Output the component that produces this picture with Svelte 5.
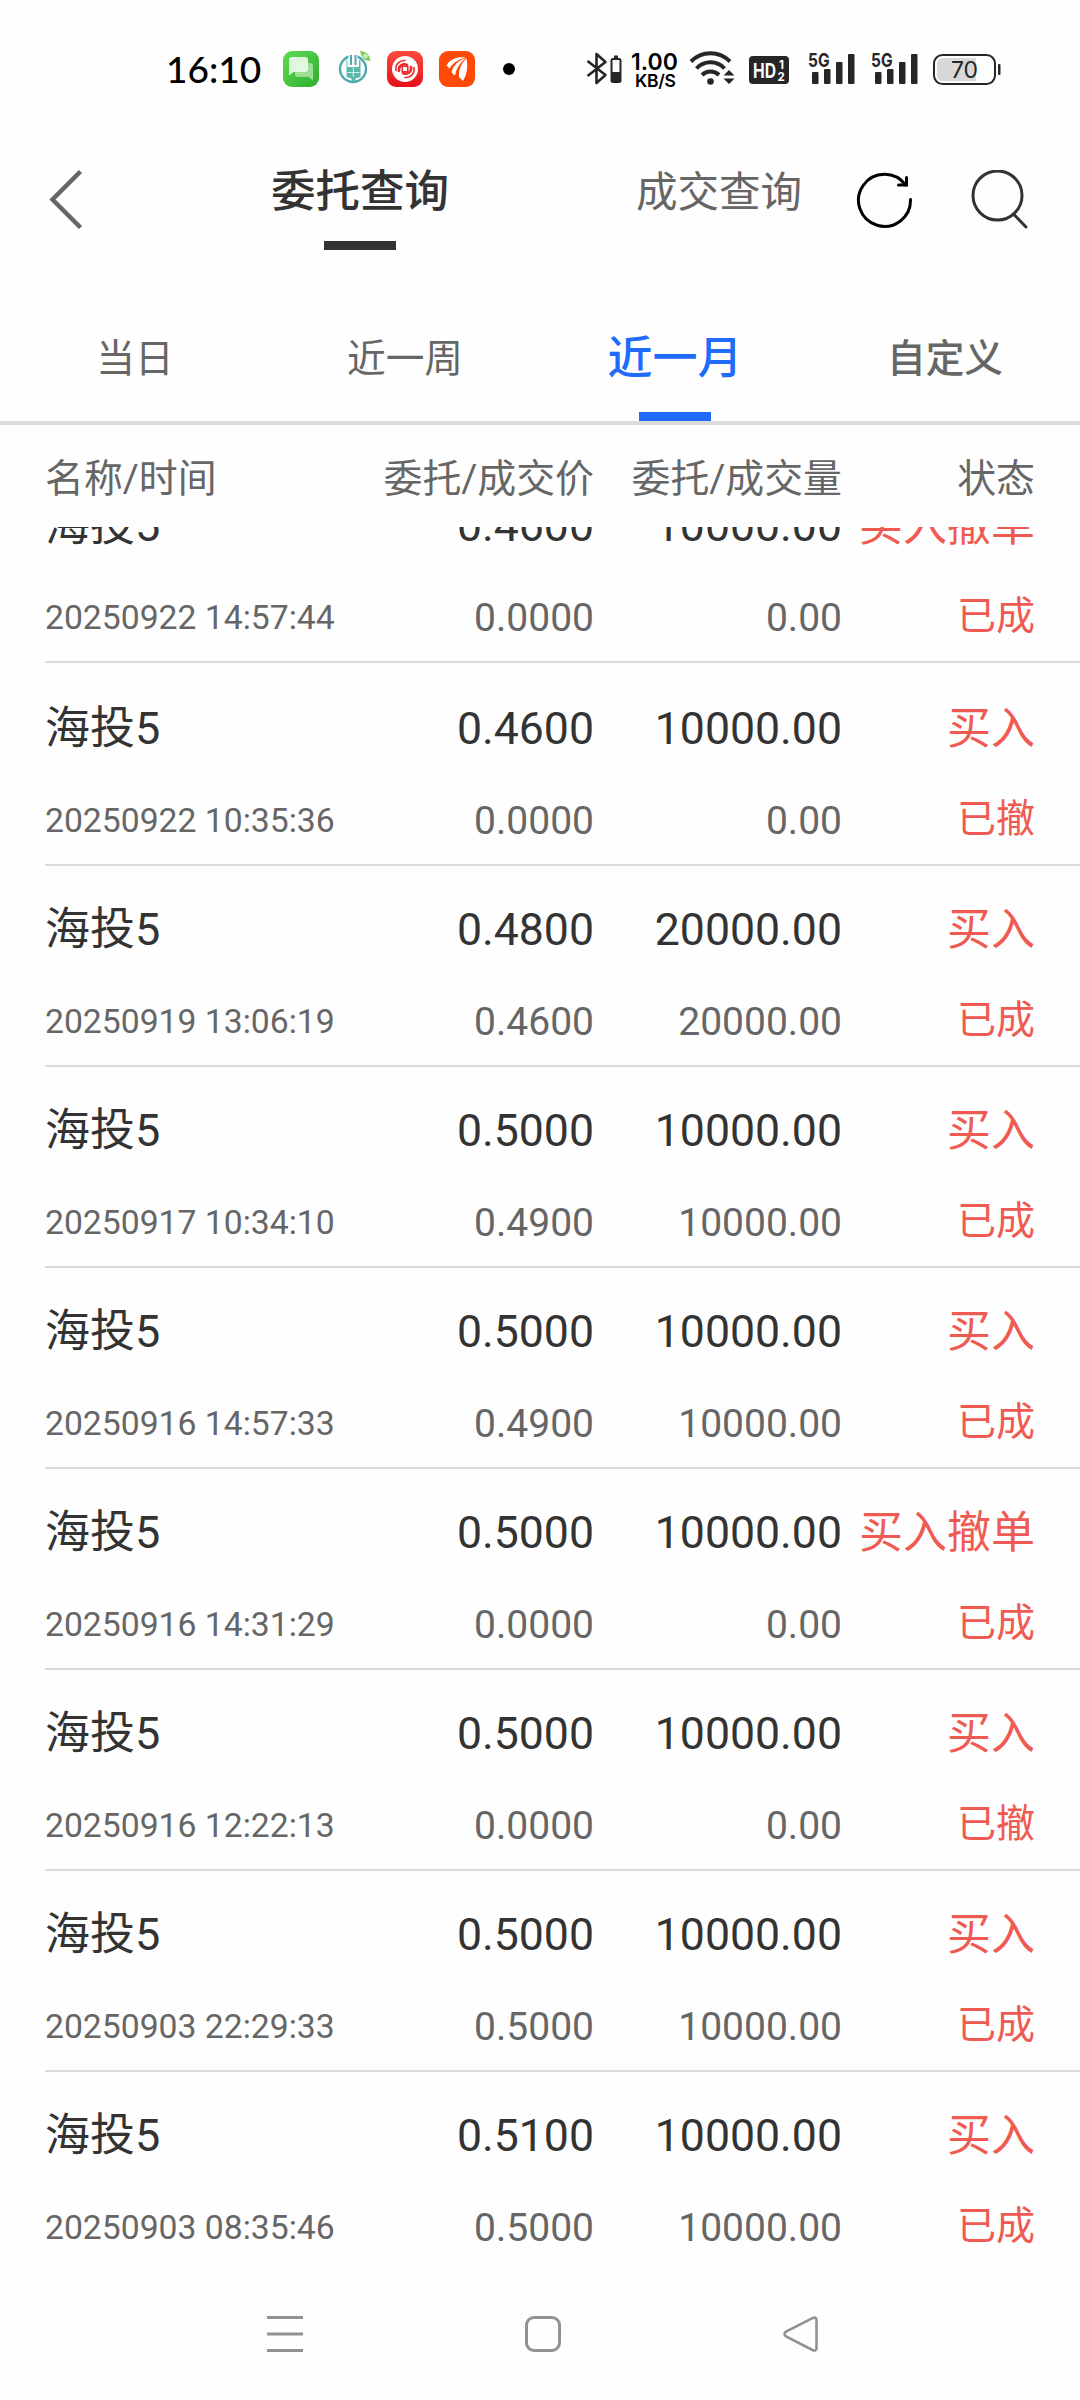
<script>
    const modes = ["委托查询", "成交查询"];
    const ranges = ["当日", "近一周", "近一月", "自定义"];

    let mode = 0;
    let range = 2;

    const orders = [
        { name: "海投5", time: "20250922 14:57:44", price: "0.4600", dealPrice: "0.0000", amount: "10000.00", dealAmount: "0.00", side: "买入撤单", state: "已成" },
        { name: "海投5", time: "20250922 10:35:36", price: "0.4600", dealPrice: "0.0000", amount: "10000.00", dealAmount: "0.00", side: "买入", state: "已撤" },
        { name: "海投5", time: "20250919 13:06:19", price: "0.4800", dealPrice: "0.4600", amount: "20000.00", dealAmount: "20000.00", side: "买入", state: "已成" },
        { name: "海投5", time: "20250917 10:34:10", price: "0.5000", dealPrice: "0.4900", amount: "10000.00", dealAmount: "10000.00", side: "买入", state: "已成" },
        { name: "海投5", time: "20250916 14:57:33", price: "0.5000", dealPrice: "0.4900", amount: "10000.00", dealAmount: "10000.00", side: "买入", state: "已成" },
        { name: "海投5", time: "20250916 14:31:29", price: "0.5000", dealPrice: "0.0000", amount: "10000.00", dealAmount: "0.00", side: "买入撤单", state: "已成" },
        { name: "海投5", time: "20250916 12:22:13", price: "0.5000", dealPrice: "0.0000", amount: "10000.00", dealAmount: "0.00", side: "买入", state: "已撤" },
        { name: "海投5", time: "20250903 22:29:33", price: "0.5000", dealPrice: "0.5000", amount: "10000.00", dealAmount: "10000.00", side: "买入", state: "已成" },
        { name: "海投5", time: "20250903 08:35:46", price: "0.5100", dealPrice: "0.5000", amount: "10000.00", dealAmount: "10000.00", side: "买入", state: "已成" }
    ];
</script>

<main class="screen">
    <div class="status-bar">
        <span class="clock">16:10</span>
        <div class="apps">
            <svg width="36" height="36" viewBox="0 0 36 36">
                <defs>
                    <linearGradient id="green" x1="0" y1="0" x2="1" y2="1">
                        <stop offset="0" stop-color="#5fdc55" />
                        <stop offset="1" stop-color="#2fae2c" />
                    </linearGradient>
                </defs>
                <rect width="36" height="36" rx="9" fill="url(#green)" />
                <path d="M14 12h13q3 0 3 3v14.5l-4.500-3.500H15q-3 0-3-3v-9z" fill="#9be095" />
                <path d="M9 6h13q3 0 3 3v9q0 3-3 3H10.500L6 24.500V9q0-3 3-3z" fill="#e9fae7" fill-opacity=".93" />
            </svg>
            <svg width="36" height="36" viewBox="0 0 36 36">
                <circle cx="18" cy="18" r="13" fill="none" stroke="#4fa9ae" stroke-width="2.400" />
                <path d="M13.500 3h9v10h-9z" fill="#fefefe" />
                <path d="M15 4h2v10h-2zM19.500 4h2v10h-2z" fill="#4fa9ae" />
                <path d="M12.500 9v7h11.500V9h1.500v17l-5 1.500V31h-4v-3.500l-5-1.500V9z" fill="#57b8ab" />
                <path d="M12 21.500h12.500M18.300 16v10" stroke="#d8efec" stroke-width="1" />
                <path d="M25 0q9 0 10.500 10q-9 0-10.500-10z" fill="#7ed052" />
                <circle cx="30.500" cy="5" r="2.300" fill="#c9ecc4" />
            </svg>
            <svg width="36" height="36" viewBox="0 0 36 36">
                <defs>
                    <linearGradient id="red" x1="0" y1="0" x2="0" y2="1">
                        <stop offset="0" stop-color="#fb4a3d" />
                        <stop offset="1" stop-color="#e60f1c" />
                    </linearGradient>
                </defs>
                <rect width="36" height="36" rx="9" fill="url(#red)" />
                <circle cx="18" cy="18" r="13" fill="#fff" />
                <g fill="none" stroke="#ee2c2b" stroke-width="2.600" stroke-linecap="round">
                    <path d="M9 19.500C8 13 13 9 18 9.500" stroke-width="1.600" />
                    <path d="M27 16.500C28 23 23 27 18 26.500" stroke-width="1.600" />
                    <path d="M12 20c-1-5 4-8 8-6" />
                    <path d="M24 16c1 5-4 8-8 6" />
                </g>
                <path d="M14.500 14.500h7v7h-7z" fill="#ee2c2b" />
                <rect x="16" y="16" width="4" height="4" fill="#fff" />
            </svg>
            <svg width="36" height="36" viewBox="0 0 36 36">
                <rect width="36" height="36" rx="9" fill="#ff4a05" />
                <g fill="#fff">
                    <path d="M26.500 6.500C18 5.500 11 8 7.500 14.500l3 3Q15 9.500 26.500 6.500z" />
                    <path d="M27 7C20 9 14 14 12.500 21.500l3.500 3Q17.500 14.500 27 7z" />
                    <path d="M27.500 7.500C22.500 12 19.500 18 20 26l4 4Q30 20 27.500 7.500z" />
                </g>
            </svg>
        </div>
        <i class="dot"></i>
        <svg class="system" width="432" height="44" viewBox="0 0 432 44">
            <g fill="none" stroke="#262626" stroke-width="2.600">
                <path d="M1.500 14l18 14-9 8V7l9 8-18 14" stroke-linejoin="round" />
                <rect x="25.500" y="12" width="9" height="23" rx="1.500" stroke-width="2" />
            </g>
            <path d="M28 8.500h4v2.500h-4zM25 25h10v10H25z" fill="#262626" />
            <text x="45" y="22.500" font-size="23" font-weight="600" textLength="47">1.00</text>
            <text x="49" y="39.500" font-size="17.500" font-weight="600" textLength="41">KB/S</text>
            <g fill="none" stroke="#262626" stroke-width="4">
                <path d="M105 14.500a27 27 0 0 1 39 0" />
                <path d="M110.500 21.500a19 19 0 0 1 28 0" />
                <path d="M116 28a12 12 0 0 1 17 0" />
            </g>
            <circle cx="124.500" cy="34.500" r="3.300" fill="#262626" />
            <path d="M137.500 28.500l5.500-5.500 5.500 5.500zM137.500 31.500h11l-5.500 5.500z" fill="#262626" />
            <rect x="163" y="9" width="40" height="28" rx="4" fill="#262626" />
            <g fill="#fff" font-weight="700">
                <text x="167" y="30.500" font-size="20" textLength="23" lengthAdjust="spacingAndGlyphs">HD</text>
                <text x="193" y="21.500" font-size="11.500">1</text>
                <text x="191.500" y="34" font-size="11.500">2</text>
            </g>
            {#each [222, 285] as x}
                <g transform="translate({x} 0)" fill="#262626">
                    <text x="0" y="20" font-size="19" font-weight="700" textLength="21.500" lengthAdjust="spacingAndGlyphs">5G</text>
                    <rect x="4" y="25" width="6.500" height="12" rx="1" />
                    <rect x="16" y="22" width="6.500" height="15" rx="1" />
                    <rect x="28" y="15" width="6.500" height="22" rx="1" />
                    <rect x="40" y="7" width="6.500" height="30" rx="1" />
                </g>
            {/each}
            <rect x="348" y="8" width="61" height="29" rx="8.500" fill="none" stroke="#262626" stroke-width="2" />
            <path d="M357 11h33v23h-33q-6 0-6-6V17q0-6 6-6z" fill="#d8d8d8" />
            <rect x="412" y="17" width="2.500" height="11" rx="1" fill="#262626" />
            <text x="365" y="31" font-size="23" fill="#262626" textLength="27">70</text>
        </svg>
    </div>

    <header class="title-bar">
        <button class="back" aria-label="back">
            <svg width="36" height="60" viewBox="0 0 36 60">
                <path d="M32.500 2.500L4.500 30.500l28 28" fill="none" stroke="#666" stroke-width="4.500" />
            </svg>
        </button>
        {#each modes as label, i}
            <button class="mode" class:active={mode === i} on:click={() => (mode = i)}>{label}</button>
        {/each}
        <button class="refresh" aria-label="refresh">
            <svg width="60" height="60" viewBox="0 0 60 60" fill="none" stroke="#000" stroke-width="3" stroke-linecap="round">
                <path d="M55.500 29.500a26 26 0 1 1-5-14.500" />
                <path d="M51.500 7.500v7.500h-8" />
            </svg>
        </button>
        <button class="search" aria-label="search">
            <svg width="60" height="60" viewBox="0 0 60 60" fill="none" stroke="#333" stroke-width="3" stroke-linecap="round">
                <circle cx="27.500" cy="25.500" r="24.500" />
                <path d="M43.500 44L56 57" />
            </svg>
        </button>
    </header>

    <nav class="ranges">
        {#each ranges as label, i}
            <button class="range" class:active={range === i} class:custom={i === 3} on:click={() => (range = i)}>{label}</button>
        {/each}
    </nav>

    <div class="columns head">
        <span>名称/时间</span>
        <span>委托/成交价</span>
        <span>委托/成交量</span>
        <span>状态</span>
    </div>

    <section class="list">
        {#each orders as order}
            <article class="order">
                <div class="columns main-line">
                    <span class="name">{order.name}</span>
                    <span>{order.price}</span>
                    <span>{order.amount}</span>
                    <span class="buy side">{order.side}</span>
                </div>
                <div class="columns sub-line">
                    <span class="time">{order.time}</span>
                    <span>{order.dealPrice}</span>
                    <span>{order.dealAmount}</span>
                    <span class="buy state">{order.state}</span>
                </div>
            </article>
        {/each}
    </section>

    <footer class="system-nav">
        <svg width="36" height="36" viewBox="0 0 36 36">
            <path d="M0 1.500h36M0 18h36M0 34.500h36" stroke="#929292" stroke-width="3" />
        </svg>
        <svg width="36" height="36" viewBox="0 0 36 36">
            <rect x="1.500" y="1.500" width="33" height="33" rx="7.500" fill="none" stroke="#929292" stroke-width="3" />
        </svg>
        <svg width="36" height="36" viewBox="0 0 36 36">
            <path d="M29.500 2.200L3 15.500q-3 2.500 0 5L29.500 34q4 1.500 4-2V4q0-3.500-4-1.800z" fill="none" stroke="#929292" stroke-width="2.600" />
        </svg>
    </footer>
</main>

<style>
    :global(body) {
        background: #fefefe;
    }

    .screen {
        display: flex;
        flex-direction: column;
        width: 1080px;
        height: 2400px;
        overflow: hidden;
        background: #fefefe;
        color: #333;
        font-family: Roboto, "Noto Sans CJK SC", sans-serif;
    }

    button {
        padding: 0;
        border: none;
        background: none;
        color: #666;
        font: inherit;
    }

    svg {
        display: block;
    }

    .status-bar {
        display: flex;
        align-items: center;
        height: 140px;
        padding: 0 0 2px 166px;
        box-sizing: border-box;
    }

    .clock {
        width: 117px;
        padding-bottom: 2px;
        color: #000;
        font-family: Lato, sans-serif;
        font-size: 37px;
        font-weight: 500;
    }

    .apps {
        display: flex;
        gap: 16px;
    }

    .dot {
        width: 12px;
        height: 12px;
        margin: 0 71px 0 28px;
        border-radius: 50%;
        background: #000;
    }

    .system {
        font-family: Inter, sans-serif;
    }

    .title-bar {
        display: flex;
        height: 138px;
    }

    .back {
        width: 180px;
        padding: 29px 0 0 48px;
        box-sizing: border-box;
    }

    .title-bar button {
        display: flex;
        align-items: flex-start;
    }

    .title-bar .mode {
        display: flex;
        flex-direction: column;
        align-items: center;
        width: 360px;
        height: 110px;
        font-size: 41.5px;
        line-height: 105px;
    }

    .mode + .mode {
        margin: 0 17px 0 60px;
    }

    .title-bar .mode + .mode {
        width: 238px;
    }

    .title-bar .mode.active {
        color: #333;
        font-size: 44.5px;
        font-weight: 500;
    }

    .mode.active::after {
        content: "";
        width: 72px;
        height: 9px;
        margin-top: -4px;
        background: #333;
    }

    .refresh,
    .search {
        padding-top: 30px;
    }

    .search {
        margin-left: 55px;
    }

    .ranges {
        display: flex;
        height: 143px;
        border-bottom: 4px solid #dadbdb;
    }

    .range {
        display: flex;
        flex: 1;
        flex-direction: column;
        align-items: center;
        justify-content: space-between;
        font-size: 38.7px;
        line-height: 161px;
    }

    .range.custom {
        font-weight: 500;
    }

    .range.active {
        color: #216bfc;
        font-size: 45px;
        font-weight: 500;
    }

    .range.active::after {
        content: "";
        width: 72px;
        height: 9px;
        margin-top: -27px;
        background: #216bfc;
    }

    .columns {
        display: grid;
        grid-template-columns: 300px 249px 248px 193px;
        padding: 0 45px;
        text-align: right;
        white-space: nowrap;
    }

    .columns span:first-child {
        text-align: left;
    }

    .head {
        height: 102px;
        color: #666;
        font-size: 38.9px;
        line-height: 108px;
    }

    .list {
        height: 1741px;
        overflow: hidden;
    }

    .order {
        height: 201px;
        margin-left: 45px;
        padding-top: 32px;
        border-bottom: 2px solid #dadbdb;
        box-sizing: border-box;
    }

    .order:first-child {
        margin-top: -65px;
    }

    .order:nth-child(2) {
        height: 203px;
        padding-top: 34px;
    }

    .order .columns {
        padding-left: 0;
    }

    .order .main-line {
        font-size: 44.6px;
        line-height: 64px;
    }

    .main-line .name {
        font-size: 45px;
    }

    .main-line .side {
        font-size: 44px;
    }

    .sub-line {
        margin-top: 30px;
        color: #666;
        font-size: 39px;
        line-height: 60px;
    }

    .time {
        font-size: 33.7px;
    }

    .buy {
        color: #ef5b52;
    }

    .sub-line .state {
        line-height: 56px;
    }

    .system-nav {
        display: flex;
        gap: 222px;
        padding: 48px 0 0 267px;
    }
</style>
